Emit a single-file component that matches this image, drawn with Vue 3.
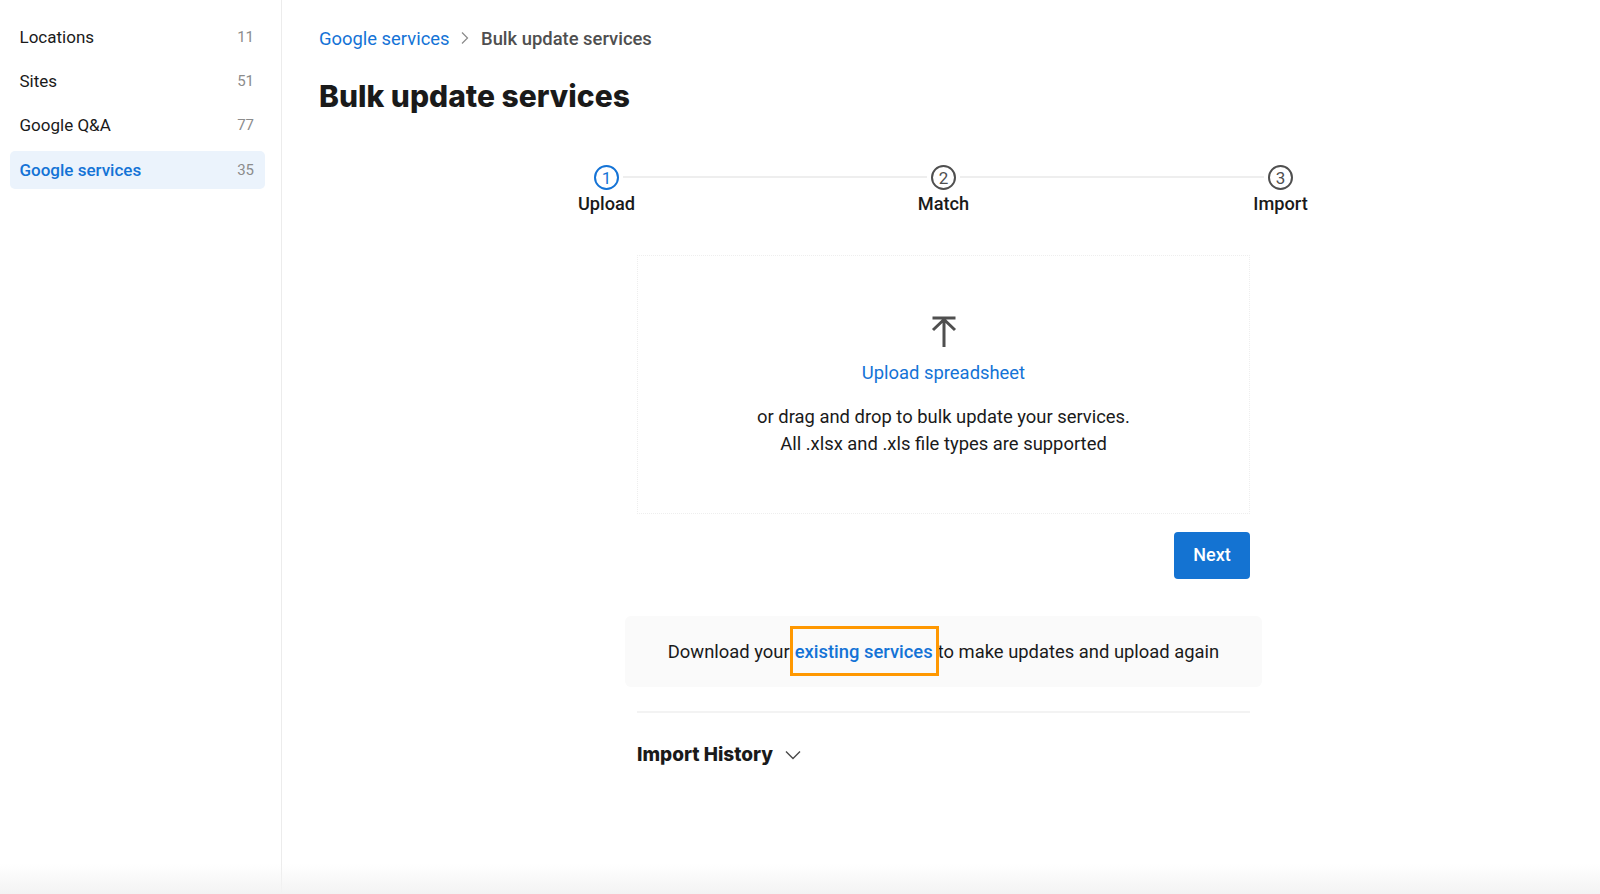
<script setup>
const items = [
  { name: 'Locations', count: 11 },
  { name: 'Sites', count: 51 },
  { name: 'Google Q&A', count: 77 },
  { name: 'Google services', count: 35, active: true },
]
const steps = ['Upload', 'Match', 'Import']
</script>

<template>
  <div class="page">
    <aside class="sidebar">
      <div v-for="item in items" :key="item.name" class="nav-item" :class="{ active: item.active }">
        <span>{{ item.name }}</span>
        <span class="count">{{ item.count }}</span>
      </div>
    </aside>
    <main class="main">
      <nav class="crumbs">
        <span class="crumb-link">Google services</span>
        <svg class="crumb-sep" width="10" height="14" viewBox="0 0 10 14"><path d="M2 1.5 7.5 7 2 12.5" fill="none" stroke="#8a8a8a" stroke-width="1.2"/></svg>
        <span class="crumb-current">Bulk update services</span>
      </nav>
      <h1 class="title">Bulk update services</h1>

      <div class="stepper">
        <template v-for="(step, i) in steps" :key="step">
          <div class="step" :class="{ current: i === 0 }">
            <span class="circle">{{ i + 1 }}</span>
            <span class="step-label">{{ step }}</span>
          </div>
          <div v-if="i < 2" class="step-line"></div>
        </template>
      </div>

      <section class="column">
        <div class="dropzone">
          <svg class="upload-icon" width="28" height="32" viewBox="0 0 28 32">
            <path d="M2.5 2h23M14 31V3.5M3 14 14 3.5 25 14" fill="none" stroke="#4f4f4f" stroke-width="3"/>
          </svg>
          <div class="upload-link">Upload spreadsheet</div>
          <p class="upload-text">or drag and drop to bulk update your services.<br>All .xlsx and .xls file types are supported</p>
        </div>
        <div class="actions"><button class="next">Next</button></div>
        <div class="banner">
          <span>Download your</span>
          <span class="existing">existing services<span class="highlight"></span></span>
          <span>to make updates and upload again</span>
        </div>
        <hr class="rule">
        <div class="history">
          <span>Import History</span>
          <svg width="16" height="10" viewBox="0 0 16 10"><path d="M1 1.5 8 8.5 15 1.5" fill="none" stroke="#4a4a4a" stroke-width="1.4"/></svg>
        </div>
      </section>
    </main>
    <div class="bottom-fade"></div>
  </div>
</template>

<style>
html, body { margin: 0; background: #fff; }
</style>

<style scoped>
.page {
  position: relative;
  display: flex;
  width: 1600px;
  height: 894px;
  overflow: hidden;
  background: #fff;
  font-family: Roboto, "Liberation Sans", sans-serif;
  color: #1a1a1a;
}
.sidebar {
  box-sizing: border-box;
  flex: none;
  width: 282px;
  padding: 17px 16px 0 10px;
  border-right: 1px solid #ececec;
}
.nav-item {
  display: flex;
  justify-content: space-between;
  align-items: center;
  box-sizing: border-box;
  height: 40px;
  margin-bottom: 4px;
  padding: 0 11px 0 9.5px;
  border-radius: 5px;
  font-size: 17px;
}
.nav-item.active {
  height: 38px;
  margin-top: 6px;
  background: #ebf3fc;
  color: #1473d6;
  font-weight: 500;
}
.count {
  font-size: 15px;
  font-weight: 400;
  color: #8c8c8c;
}
.main {
  flex: 1;
  padding: 26px 0 0 37px;
}
.crumbs {
  display: flex;
  align-items: center;
  height: 24px;
  font-size: 18.4px;
}
.crumb-link { color: #1473d6; }
.crumb-sep { margin: 0 11.5px 0 10px; }
.crumb-current { color: #4f4f4f; font-weight: 500; }
.title {
  margin: 26px 0 0;
  font-family: Inter, sans-serif;
  font-size: 30px;
  line-height: 40px;
  font-weight: 800;
  color: #1a1a1a;
}
.stepper {
  display: flex;
  align-items: flex-start;
  width: 699px;
  margin: 49px 0 0 275px;
}
.step {
  display: flex;
  flex-direction: column;
  align-items: center;
  flex: none;
  width: 25px;
}
.circle {
  box-sizing: border-box;
  display: flex;
  align-items: center;
  justify-content: center;
  width: 25px;
  height: 25px;
  flex: none;
  border: 2px solid #4f4f4f;
  border-radius: 50%;
  font-size: 17px;
  color: #4f4f4f;
}
.step.current .circle { border-color: #1473d6; color: #1473d6; }
.step-label {
  margin-top: 2px;
  font-size: 18.2px;
  line-height: 24px;
  font-weight: 500;
  white-space: nowrap;
  color: #1a1a1a;
}
.step-line {
  flex: 1;
  height: 2px;
  margin: 11px 4px 0;
  background: #eeeeee;
}
.column {
  width: 613px;
  margin: 39px 0 0 318px;
}
.dropzone {
  box-sizing: border-box;
  height: 259px;
  padding-top: 60px;
  border: 1px dotted #eeeeee;
  text-align: center;
}
.upload-icon { display: block; margin: 0 auto; }
.upload-link {
  margin-top: 11px;
  font-size: 18.4px;
  line-height: 28px;
  color: #1473d6;
}
.upload-text {
  margin: 16px 0 0;
  font-size: 18.4px;
  line-height: 27px;
  color: #1a1a1a;
}
.actions {
  display: flex;
  justify-content: flex-end;
  margin-top: 18px;
}
.next {
  width: 76px;
  height: 47px;
  padding: 0 0 2px;
  border: none;
  border-radius: 4px;
  background: #1473d2;
  color: #fff;
  font-family: inherit;
  font-size: 18px;
  font-weight: 500;
}
.banner {
  display: flex;
  justify-content: center;
  align-items: center;
  gap: 5px;
  height: 71px;
  margin: 37px -12px 0;
  border-radius: 6px;
  background: #fafafa;
  font-size: 18.4px;
}
.existing {
  position: relative;
  color: #1473d6;
  font-weight: 500;
}
.highlight {
  position: absolute;
  inset: -15px -6px -14px -5px;
  border: 3px solid #ff9800;
  pointer-events: none;
}
.rule {
  height: 2px;
  margin: 24px 0 0;
  border: none;
  background: #f3f3f3;
}
.history {
  display: flex;
  align-items: center;
  gap: 12px;
  margin-top: 29px;
  font-family: Inter, sans-serif;
  font-size: 19px;
  line-height: 26px;
  font-weight: 800;
  color: #1a1a1a;
}
.bottom-fade {
  position: absolute;
  left: 0;
  right: 0;
  bottom: 0;
  height: 30px;
  background: linear-gradient(to bottom, rgba(243,243,243,0), #f3f3f3);
  pointer-events: none;
}
</style>
